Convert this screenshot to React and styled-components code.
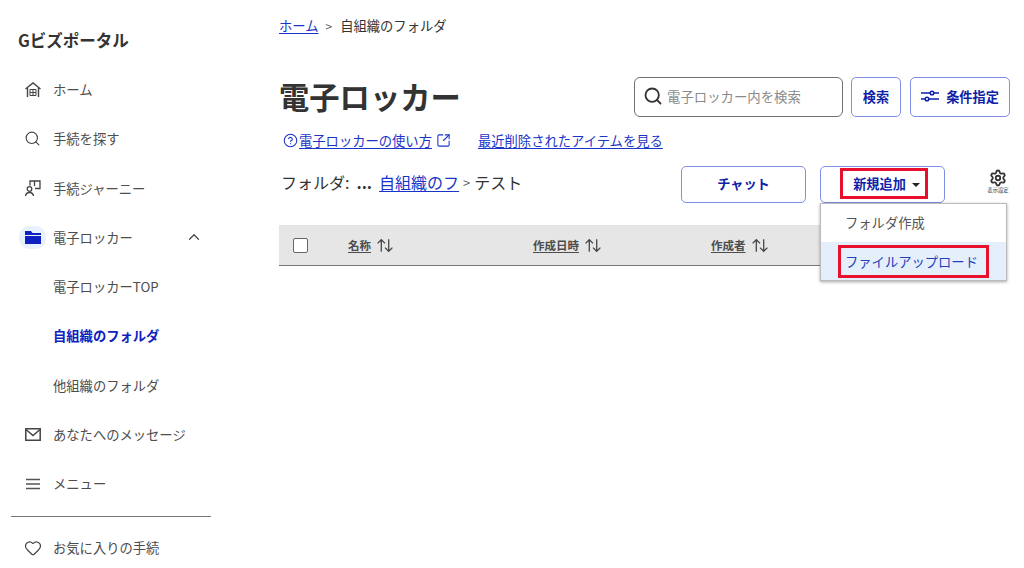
import React from 'react';
import styled, { createGlobalStyle } from 'styled-components';
import { Search, Heart, ChevronUp, Settings, SquareArrowOutUpRight, CircleHelp } from 'lucide-react';

const Global = createGlobalStyle`
    html, body {
        margin: 0;
        height: 568px;
        overflow: hidden;
        background: #fff;
        font-family: "Noto Sans CJK JP", "Noto Sans", sans-serif;
        color: #333;
    }
`;

const Page = styled.div`
    display: flex;
    width: 1024px;
    height: 568px;
    overflow: hidden;
`;

const Sidebar = styled.aside`
    width: 279px;
    flex: none;
    padding-left: 11px;
    box-sizing: border-box;
`;
const Logo = styled.div`
    height: 24px;
    margin: 28px 0 13px 7px;
    font-size: 16.5px;
    line-height: 24px;
    font-weight: 700;
    color: #333;
`;
const NavItem = styled.div`
    display: flex;
    align-items: center;
    gap: 7px;
    width: 184px;
    height: 49.25px;
    margin-left: 8px;
    padding-left: ${p => (p.$sub ? '34px' : '0')};
    box-sizing: border-box;
    font-size: 13.3px;
    font-weight: ${p => (p.$active ? 700 : 400)};
    color: ${p => (p.$active ? '#0f1fc0' : '#4d4d4d')};
`;
const IconSlot = styled.span`
    display: flex;
    align-items: center;
    justify-content: center;
    width: 27px;
    height: 23px;
    flex: none;
    border-radius: 10px;
    background: ${p => (p.$on ? '#e8f1fe' : 'transparent')};
    color: #444;
`;
const Caret = styled(ChevronUp)`
    margin-left: auto;
    color: #444;
`;
const Divider = styled.hr`
    width: 200px;
    height: 1px;
    margin: 8px 0 6px;
    border: 0;
    background: #777;
`;

const Main = styled.main`
    flex: 1;
    min-width: 0;
    padding-right: 14px;
`;
const Crumbs = styled.nav`
    display: flex;
    align-items: center;
    height: 20px;
    margin-top: 15px;
    font-size: 13.3px;
    color: #333;
`;
const Link = styled.a`
    color: #1a33c8;
    text-decoration: underline;
    text-underline-offset: 2px;
    white-space: nowrap;
`;
const Sep = styled.span`
    margin: 0 ${p => p.$gap || 8}px 0 ${p => p.$gap || 7}px;
    font-size: ${p => p.$size || 12}px;
    color: #666;
`;
const TitleRow = styled.div`
    display: flex;
    align-items: center;
    height: 40px;
    margin-top: 42px;
`;
const Title = styled.h1`
    margin: 0 auto 2px 0;
    font-size: 30.3px;
    line-height: 40px;
    font-weight: 700;
    color: #333;
`;
const SearchBox = styled.div`
    display: flex;
    align-items: center;
    gap: 4px;
    width: 209px;
    height: 40px;
    padding: 0 0 2px 8px;
    box-sizing: border-box;
    border: 1px solid #707070;
    border-radius: 6px;
    font-size: 13.4px;
    color: #8a8a8a;
    svg { color: #333; }
`;
const Button = styled.button`
    display: flex;
    align-items: center;
    justify-content: center;
    gap: 7px;
    width: ${p => p.$w}px;
    height: ${p => p.$h || 40}px;
    margin-left: ${p => p.$ml || 0}px;
    padding: 0 0 2px;
    flex: none;
    box-sizing: border-box;
    background: #fff;
    border: 1px solid #7f8fe6;
    border-radius: 5px;
    font-family: inherit;
    font-size: 13.2px;
    font-weight: 700;
    color: #0f1fa8;
`;
const LinkRow = styled.div`
    display: flex;
    align-items: center;
    height: 20px;
    margin-top: 13px;
    padding-left: 4px;
    font-size: 13.3px;
    svg { color: #1a33c8; flex: none; }
`;
const HelpLink = styled(Link)`
    margin: 0 4px 0 1px;
`;
const RecentLink = styled(Link)`
    margin-left: 27px;
`;
const ActionRow = styled.div`
    display: flex;
    align-items: flex-start;
    height: 37px;
    margin-top: 16px;
`;
const FolderPath = styled.div`
    display: flex;
    align-items: center;
    height: 24px;
    margin: 4px auto 0 2px;
    font-size: 16px;
    color: #333;
`;
const Dots = styled.b`
    margin: 0 7px 0 7px;
`;
const AddWrap = styled.div`
    position: relative;
    margin-left: 14px;
`;
const RedBox = styled.span`
    display: flex;
    align-items: center;
    gap: 6px;
    margin-left: ${p => p.$ml || 0}px;
    padding: ${p => p.$pad};
    border: 3px solid #e8112d;
`;
const Arrow = styled.i`
    width: 0;
    height: 0;
    margin-top: 2px;
    border: 4px solid transparent;
    border-top: 4px solid #222;
    border-bottom: 0;
`;
const Dropdown = styled.div`
    position: absolute;
    top: 37px;
    left: 0;
    z-index: 2;
    width: 187px;
    height: 78px;
    background: #fff;
    border: 1px solid #bbb;
    box-sizing: border-box;
    box-shadow: 0 1px 3px rgba(0, 0, 0, 0.35);
`;
const MenuItem = styled.div`
    display: flex;
    align-items: center;
    height: 38px;
    box-sizing: border-box;
    padding: ${p => (p.$hl ? '0 0 0 17px' : '0 0 2px 24px')};
    font-size: 13.3px;
    color: ${p => (p.$hl ? '#2440b8' : '#555')};
    background: ${p => (p.$hl ? '#e5effb' : '#fff')};
`;
const Gear = styled.div`
    display: flex;
    flex-direction: column;
    align-items: center;
    width: 24px;
    margin: 3px 0 0 41px;
    font-size: 5.2px;
    line-height: 6px;
    white-space: nowrap;
    color: #333;
`;
const TableHead = styled.div`
    display: grid;
    grid-template-columns: 55px 185px 178px 1fr;
    align-items: center;
    width: 728px;
    height: 41px;
    margin-top: 22px;
    padding-left: 14px;
    box-sizing: border-box;
    background: #e6e6e6;
    border-bottom: 1px solid #777;
`;
const Check = styled.span`
    display: block;
    width: 15px;
    height: 15px;
    box-sizing: border-box;
    background: #fff;
    border: 1px solid #666;
    border-radius: 2px;
`;
const Head = styled.div`
    display: flex;
    align-items: center;
    gap: 5px;
    font-size: 11.5px;
    font-weight: 700;
    color: #4d4d4d;
    u { text-underline-offset: 2px; }
`;

const HomeIcon = () => (
    <svg width="18" height="18" viewBox="0 0 18 18" fill="none" stroke="currentColor" strokeWidth="1.4">
        <path d="M1.500 8 9 2l7.500 6" />
        <path d="M3.500 7v9M14.500 7v9" />
        <path d="M6 8.500h6v6H6zM6 11.500h6M9 8.500v6" strokeWidth="1" />
    </svg>
);
const JourneyIcon = () => (
    <svg width="18" height="18" viewBox="0 0 18 18" fill="none" stroke="currentColor" strokeWidth="1.300">
        <circle cx="5.500" cy="10" r="2.300" />
        <path d="M1.500 17c.4-2.500 2-3.500 4-3.500s3.600 1 4 3.500" />
        <path d="M6 6.500V2h10v7.500h-5" />
        <path d="M10.500 2v5" />
    </svg>
);
const FolderIcon = () => (
    <svg width="16" height="14" viewBox="0 0 16 14" fill="#0f1fc0">
        <path d="M0 1h6l1.500 2H16v2H0z" />
        <path d="M0 6h16v8H0z" />
    </svg>
);
const MailIcon = () => (
    <svg width="16" height="13" viewBox="0 0 16 13" fill="none" stroke="currentColor" strokeWidth="1.500">
        <path d="M.8.800h14.400v11.400H.8z" />
        <path d="m1 1.500 7 6 7-6" />
    </svg>
);
const MenuIcon = () => (
    <svg width="14" height="12" viewBox="0 0 14 12" fill="none" stroke="#555" strokeWidth="1.300">
        <path d="M0 1.500h14M0 6h14M0 10.500h14" />
    </svg>
);
const SlidersIcon = () => (
    <svg width="18" height="12" viewBox="0 0 18 12" fill="none" stroke="currentColor" strokeWidth="1.500">
        <path d="M0 3h9M13 3h5M0 9h4M8 9h10" />
        <circle cx="11" cy="3" r="1.800" />
        <circle cx="6" cy="9" r="1.800" />
    </svg>
);
const SortIcon = () => (
    <svg width="18" height="15" viewBox="0 0 17 14" fill="none" stroke="#444" strokeWidth="1.200">
        <path d="M5 13V1.500M1.500 5 5 1.500 8.500 5" />
        <path d="M12 1v11.500M8.500 9l3.500 3.500L15.500 9" />
    </svg>
);

const navTop = [
    { label: 'ホーム', icon: <HomeIcon /> },
    { label: '手続を探す', icon: <Search size={17} strokeWidth={1.6} /> },
    { label: '手続ジャーニー', icon: <JourneyIcon /> },
];
const subItems = [
    { label: '電子ロッカーTOP' },
    { label: '自組織のフォルダ', active: true },
    { label: '他組織のフォルダ' },
];

const App = () => {
    return (
        <Page>
            <Global />
            <Sidebar>
                <Logo>Gビズポータル</Logo>
                {navTop.map(item => (
                    <NavItem key={item.label}>
                        <IconSlot>{item.icon}</IconSlot>
                        {item.label}
                    </NavItem>
                ))}
                <NavItem>
                    <IconSlot $on><FolderIcon /></IconSlot>
                    電子ロッカー
                    <Caret size={18} strokeWidth={1.6} />
                </NavItem>
                {subItems.map(item => (
                    <NavItem key={item.label} $sub $active={item.active}>{item.label}</NavItem>
                ))}
                <NavItem>
                    <IconSlot><MailIcon /></IconSlot>
                    あなたへのメッセージ
                </NavItem>
                <NavItem>
                    <IconSlot><MenuIcon /></IconSlot>
                    メニュー
                </NavItem>
                <Divider />
                <NavItem>
                    <IconSlot><Heart size={18} strokeWidth={1.6} /></IconSlot>
                    お気に入りの手続
                </NavItem>
            </Sidebar>
            <Main>
                <Crumbs>
                    <Link>ホーム</Link>
                    <Sep>&gt;</Sep>
                    自組織のフォルダ
                </Crumbs>
                <TitleRow>
                    <Title>電子ロッカー</Title>
                    <SearchBox>
                        <Search size={20} strokeWidth={2.2} />
                        電子ロッカー内を検索
                    </SearchBox>
                    <Button $w={50} $ml={8}>検索</Button>
                    <Button $w={100} $ml={9}>
                        <SlidersIcon />
                        条件指定
                    </Button>
                </TitleRow>
                <LinkRow>
                    <CircleHelp size={15} strokeWidth={1.7} />
                    <HelpLink>電子ロッカーの使い方</HelpLink>
                    <SquareArrowOutUpRight size={15} strokeWidth={1.7} />
                    <RecentLink>最近削除されたアイテムを見る</RecentLink>
                </LinkRow>
                <ActionRow>
                    <FolderPath>
                        フォルダ:
                        <Dots>...</Dots>
                        <Link>自組織のフ</Link>
                        <Sep $gap={4} $size={13}>&gt;</Sep>
                        テスト
                    </FolderPath>
                    <Button $w={125} $h={37}>チャット</Button>
                    <AddWrap>
                        <Button $w={125} $h={37}>
                            <RedBox $ml={3} $pad="3px 5px 3px 10px">
                                新規追加
                                <Arrow />
                            </RedBox>
                        </Button>
                        <Dropdown>
                            <MenuItem>フォルダ作成</MenuItem>
                            <MenuItem $hl>
                                <RedBox $pad="4px 8px 4px 4px">ファイルアップロード</RedBox>
                            </MenuItem>
                        </Dropdown>
                    </AddWrap>
                    <Gear>
                        <Settings size={18} strokeWidth={2.4} />
                        表示設定
                    </Gear>
                </ActionRow>
                <TableHead>
                    <Check />
                    <Head><u>名称</u><SortIcon /></Head>
                    <Head><u>作成日時</u><SortIcon /></Head>
                    <Head><u>作成者</u><SortIcon /></Head>
                </TableHead>
            </Main>
        </Page>
    );
};

export default App;
